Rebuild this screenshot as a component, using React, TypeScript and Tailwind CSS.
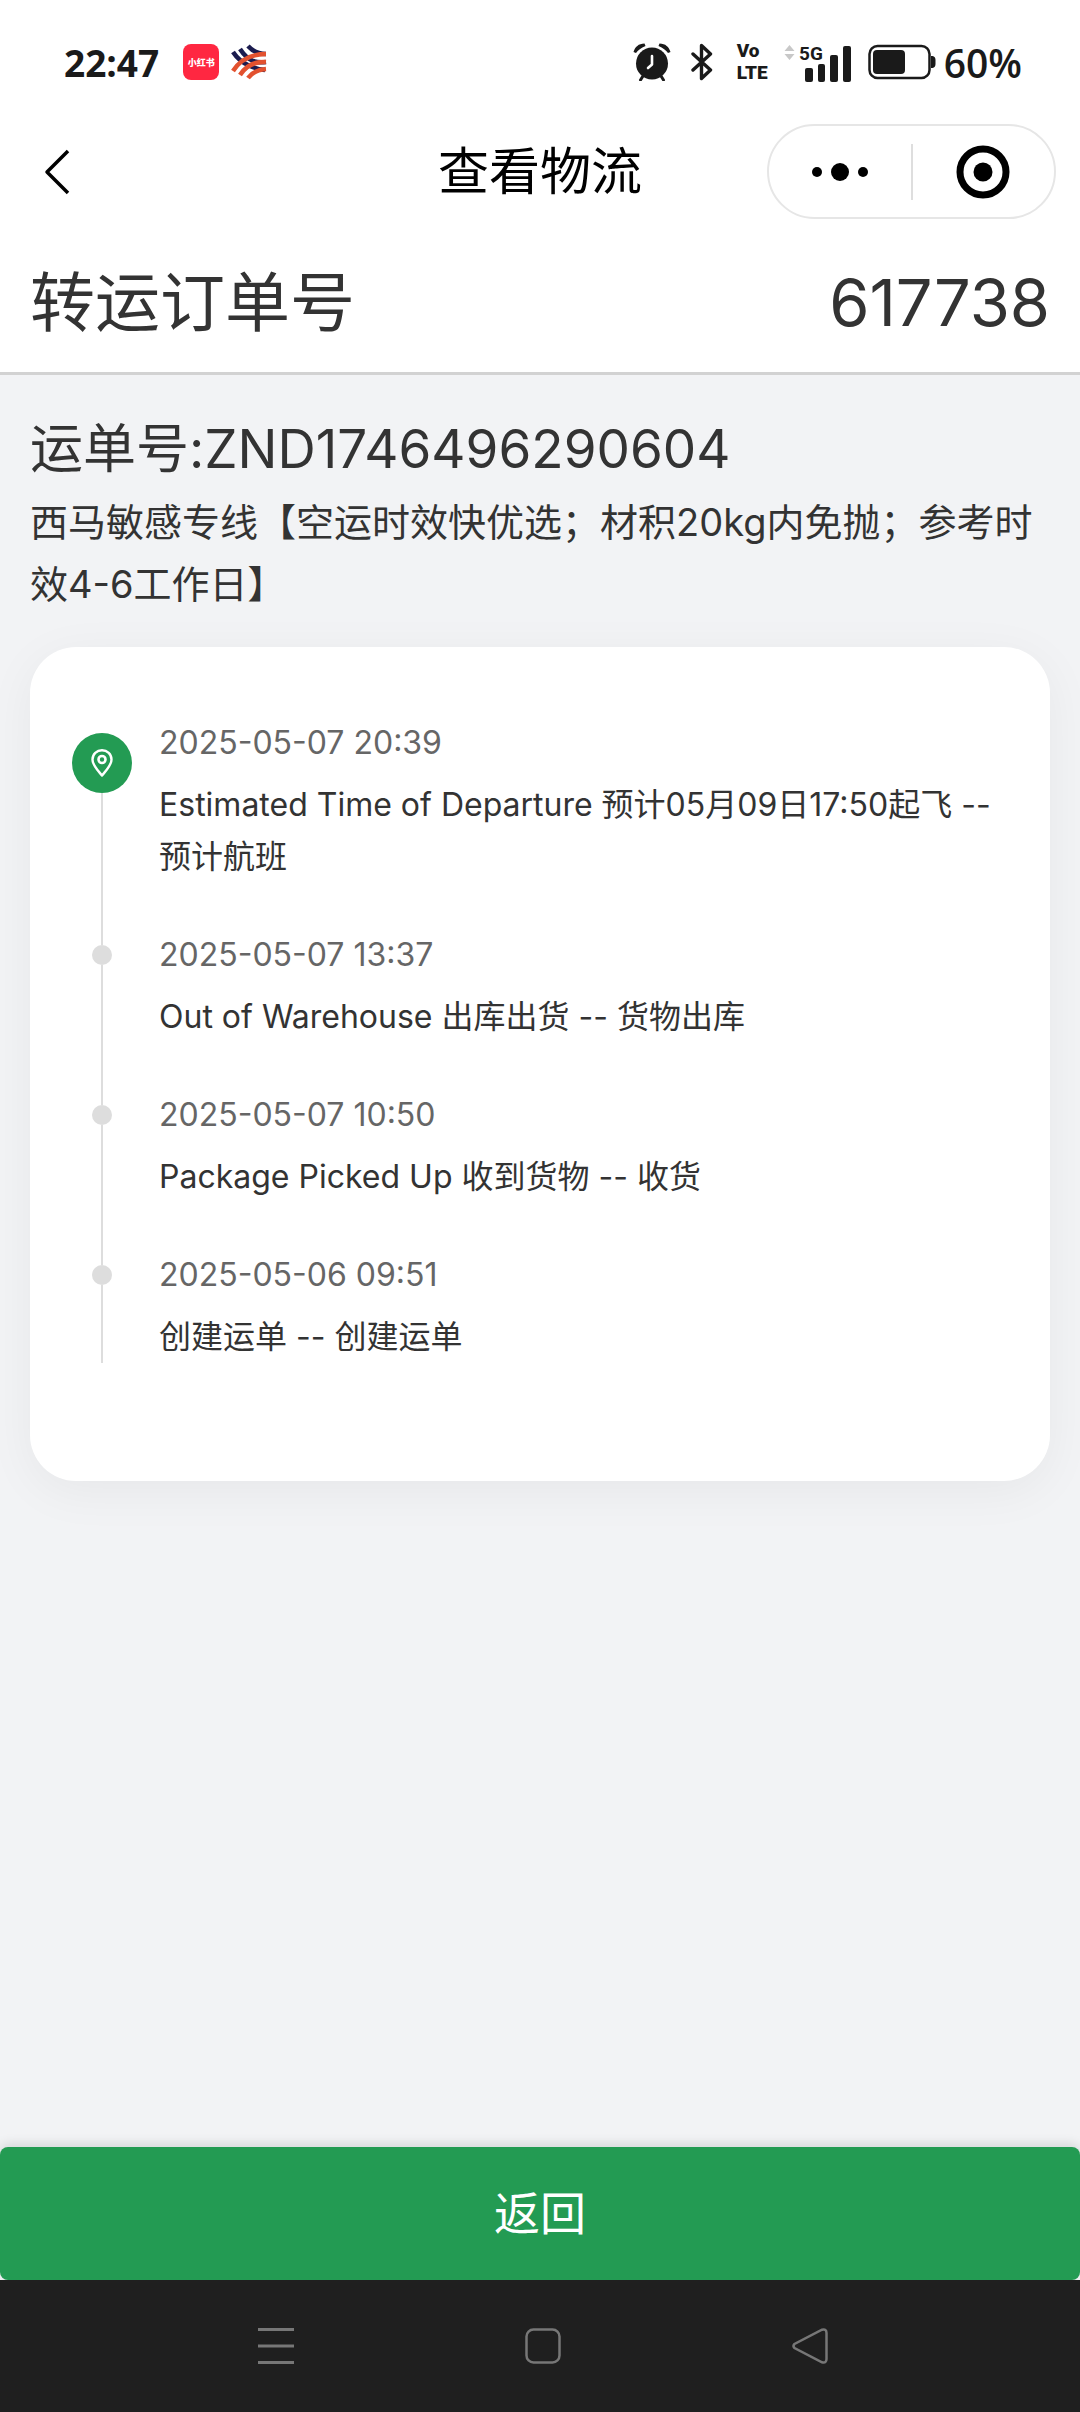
import React from 'react';

type TrackingEvent = {
  time: string;
  text: string;
};

const events: TrackingEvent[] = [
  { time: '2025-05-07 20:39', text: 'Estimated Time of Departure 预计05月09日17:50起飞 -- 预计航班' },
  { time: '2025-05-07 13:37', text: 'Out of Warehouse 出库出货 -- 货物出库' },
  { time: '2025-05-07 10:50', text: 'Package Picked Up 收到货物 -- 收货' },
  { time: '2025-05-06 09:51', text: '创建运单 -- 创建运单' },
];

const AlarmIcon = () => (
  <svg className="w-[38px] h-[38px]" viewBox="0 0 38 38" fill="none">
    <circle cx="19" cy="20.5" r="16" fill="#1a1a1a" />
    <path d="M0.500 9C2 4 5.500 0.500 11.500 0.500L12.500 3C8 5 5 7 3 10Z" fill="#1a1a1a" />
    <path d="M37.500 9C36 4 32.500 0.500 26.500 0.500L25.500 3C30 5 33 7 35 10Z" fill="#1a1a1a" />
    <path d="M10 33L7.500 37M28 33L30.500 37" stroke="#1a1a1a" strokeWidth="3" strokeLinecap="round" />
    <path d="M19 13V21.500L15 25" stroke="white" strokeWidth="2.600" strokeLinecap="round" strokeLinejoin="round" />
  </svg>
);

const BluetoothIcon = () => (
  <svg className="w-[22px] h-[38px]" viewBox="0 0 22 38" fill="none" stroke="#1a1a1a" strokeWidth="3.400" strokeLinecap="round" strokeLinejoin="round">
    <path d="M2 11L19.500 27L10.500 35.500V2.500L19.500 11L2 27" />
  </svg>
);

const SignalIcon = () => (
  <svg className="w-[68px] h-[42px]" viewBox="0 -4 68 42" fill="#1a1a1a">
    <path d="M5.500 0L10.500 6H0.500ZM5.500 15L10.500 9H0.500Z" fill="#c8c8c8" />
    <text x="15" y="15" fontSize="19" fontWeight="700" fontFamily="Roboto, sans-serif">5G</text>
    <rect x="21" y="23" width="8" height="14" rx="2" />
    <rect x="34" y="19" width="7" height="18" rx="2" />
    <rect x="46" y="10" width="8" height="27" rx="2" />
    <rect x="59" y="1" width="8" height="36" rx="2" />
  </svg>
);

const BatteryIcon = () => (
  <svg className="w-[68px] h-[36px]" viewBox="0 0 68 36" fill="none">
    <rect x="1.500" y="2" width="60" height="32" rx="8" stroke="#1a1a1a" strokeWidth="2.500" />
    <rect x="5" y="6" width="32" height="24" rx="4" fill="#1a1a1a" />
    <path d="M63 12H64.500Q67.500 12.500 67.500 16V20Q67.500 23.500 64.500 24H63Z" fill="#1a1a1a" />
  </svg>
);

const BankIcon = () => (
  <svg className="w-9 h-9" viewBox="0 0 36 36" fill="none" strokeWidth="4.500">
    <path d="M2 8Q8 17 17 21Q25 25 34 26" stroke="#1b1c4f" />
    <path d="M9 5Q15 14 22 17Q28 19 35 18" stroke="#1b1c4f" />
    <path d="M17 2Q24 10 35 10" stroke="#1b1c4f" />
    <path d="M2 27Q13 10 35 10" stroke="#e2512f" />
    <path d="M9 31Q18 17 35 18" stroke="#e2512f" />
    <path d="M17 34Q23 26 35 25" stroke="#e2512f" />
  </svg>
);

const PinIcon = () => (
  <svg className="w-[22px] h-[28px]" viewBox="0 0 22 28" fill="none" stroke="white" strokeLinejoin="round">
    <path d="M11 26.500C7 21.500 1.500 16.500 1.500 10.500A9.500 9.300 0 0 1 20.500 10.500C20.500 16.500 15 21.500 11 26.500Z" strokeWidth="2.400" />
    <circle cx="11" cy="10.500" r="3.500" strokeWidth="2.600" />
  </svg>
);

const StatusBar: React.FC = () => (
  <div className="flex h-[124px] items-center justify-between pl-16 pr-[58px] font-['Open_Sans','Noto_Sans_CJK_SC',sans-serif] text-[#1a1a1a]">
    <div className="flex items-center">
      <span className="text-[37px] font-bold leading-none">22:47</span>
      <span className="ml-6 flex h-9 w-9 items-center justify-center rounded-lg bg-[#ff2741] text-[9px] font-black leading-none text-white">
        小红书
      </span>
      <span className="ml-3">
        <BankIcon />
      </span>
    </div>
    <div className="flex items-center">
      <AlarmIcon />
      <span className="ml-5">
        <BluetoothIcon />
      </span>
      <span className="ml-6 font-['Roboto',sans-serif] text-[19px] font-black leading-[22px]">
        Vo
        <br />
        LTE
      </span>
      <span className="ml-4">
        <SignalIcon />
      </span>
      <span className="ml-4">
        <BatteryIcon />
      </span>
      <span className="ml-2 text-[39px] font-semibold leading-none">60%</span>
    </div>
  </div>
);

const TitleBar: React.FC = () => (
  <div className="grid h-[95px] grid-cols-[1fr_auto_1fr] items-center px-6">
    <button type="button" aria-label="返回上一页" className="flex h-full w-16 items-center pl-5">
      <svg className="h-[46px] w-[26px]" viewBox="0 0 26 46" fill="none" stroke="black" strokeWidth="3.500">
        <path d="M24 2L3 23L24 44" strokeLinejoin="round" />
      </svg>
    </button>
    <h1 className="text-[51px] leading-[60px] text-black">查看物流</h1>
    <div className="flex h-full w-[289px] items-center justify-self-end rounded-full border-2 border-[#e6e6e6]">
      <button type="button" aria-label="更多" className="flex h-full flex-1 items-center justify-center">
        <svg className="h-5 w-14" viewBox="0 0 56 20" fill="black">
          <circle cx="5" cy="10" r="5" />
          <circle cx="28" cy="10" r="9" />
          <circle cx="51" cy="10" r="5" />
        </svg>
      </button>
      <span className="h-14 w-0.5 bg-[#dedede]" />
      <button type="button" aria-label="关闭" className="flex h-full flex-1 items-center justify-center">
        <svg className="h-[54px] w-[54px]" viewBox="0 0 54 54">
          <circle cx="27" cy="27" r="23" fill="none" stroke="black" strokeWidth="7" />
          <circle cx="27" cy="27" r="9.500" fill="black" />
        </svg>
      </button>
    </div>
  </div>
);

const Timeline: React.FC = () => (
  <ol className="rounded-[46px] bg-white px-[42px] pt-[70px] pb-[118px] shadow-[0_10px_50px_rgba(0,0,0,0.05)]">
    {events.map((event, index) => {
      const isCurrent = index === 0;
      const isLast = index === events.length - 1;

      return (
        <li key={event.time} className="flex gap-[27px]">
          <div className="flex w-[60px] shrink-0 flex-col items-center">
            <span className={`h-4 w-0.5 ${isCurrent ? 'bg-transparent' : 'bg-[#dddddd]'}`} />
            {isCurrent ? (
              <span className="flex h-[60px] w-[60px] items-center justify-center rounded-full bg-[#239b53]">
                <PinIcon />
              </span>
            ) : (
              <span className="h-5 w-5 rounded-full bg-[#dddddd]" />
            )}
            <span className="w-0.5 flex-1 bg-[#dddddd]" />
          </div>
          <div className={`flex-1 text-[32px] leading-[52px] ${isLast ? '' : 'pb-[46px]'}`}>
            <time className="block text-[#666666]">{event.time}</time>
            <p className="mt-[10px] text-[#333333]">{event.text}</p>
          </div>
        </li>
      );
    })}
  </ol>
);

const SystemNav: React.FC = () => (
  <nav className="grid h-[132px] grid-cols-3 items-center justify-items-center bg-[#1f1f1f] pl-[142px] pr-[136px]">
    <button type="button" aria-label="菜单">
      <svg className="h-9 w-9" viewBox="0 0 36 36" stroke="#777777" strokeWidth="3">
        <path d="M0 1.500H36M0 18H36M0 34.500H36" />
      </svg>
    </button>
    <button type="button" aria-label="主屏幕">
      <svg className="h-9 w-9" viewBox="0 0 36 36" fill="none" stroke="#777777" strokeWidth="2.500">
        <rect x="1.500" y="1.500" width="33" height="33" rx="7" />
      </svg>
    </button>
    <button type="button" aria-label="后退">
      <svg className="h-9 w-9" viewBox="0 0 36 36" fill="none" stroke="#777777" strokeWidth="2.500">
        <path d="M2.500 16Q0.500 18 2.500 20L30 34.300Q34.500 35.500 34.500 31V5Q34.500 0.500 30 1.700Z" />
      </svg>
    </button>
  </nav>
);

const App: React.FC = () => {
  return (
    <div className="flex min-h-screen flex-col bg-[#f2f3f5] font-['Inter','Noto_Sans_CJK_SC',sans-serif] text-[#333333]">
      <header className="border-b-3 border-[#d2d2d2] bg-white">
        <StatusBar />
        <TitleBar />
        <div className="flex items-center justify-between px-[30px] pt-9 pb-[21px] text-[65px] leading-[96px]">
          <span>转运订单号</span>
          <span>617738</span>
        </div>
      </header>

      <main className="flex-1 px-[30px] pt-8">
        <h2 className="text-[53px] leading-[84px]">运单号:ZND1746496290604</h2>
        <p className="mb-8 text-[38px] leading-[62px]">
          西马敏感专线【空运时效快优选；材积20kg内免抛；参考时效4-6工作日】
        </p>
        <Timeline />
      </main>

      <button
        type="button"
        className="h-[133px] w-full rounded-lg bg-[#239b53] text-[46px] text-white shadow-[0_-3px_12px_rgba(0,0,0,0.12)]"
      >
        返回
      </button>
      <SystemNav />
    </div>
  );
};

export default App;
